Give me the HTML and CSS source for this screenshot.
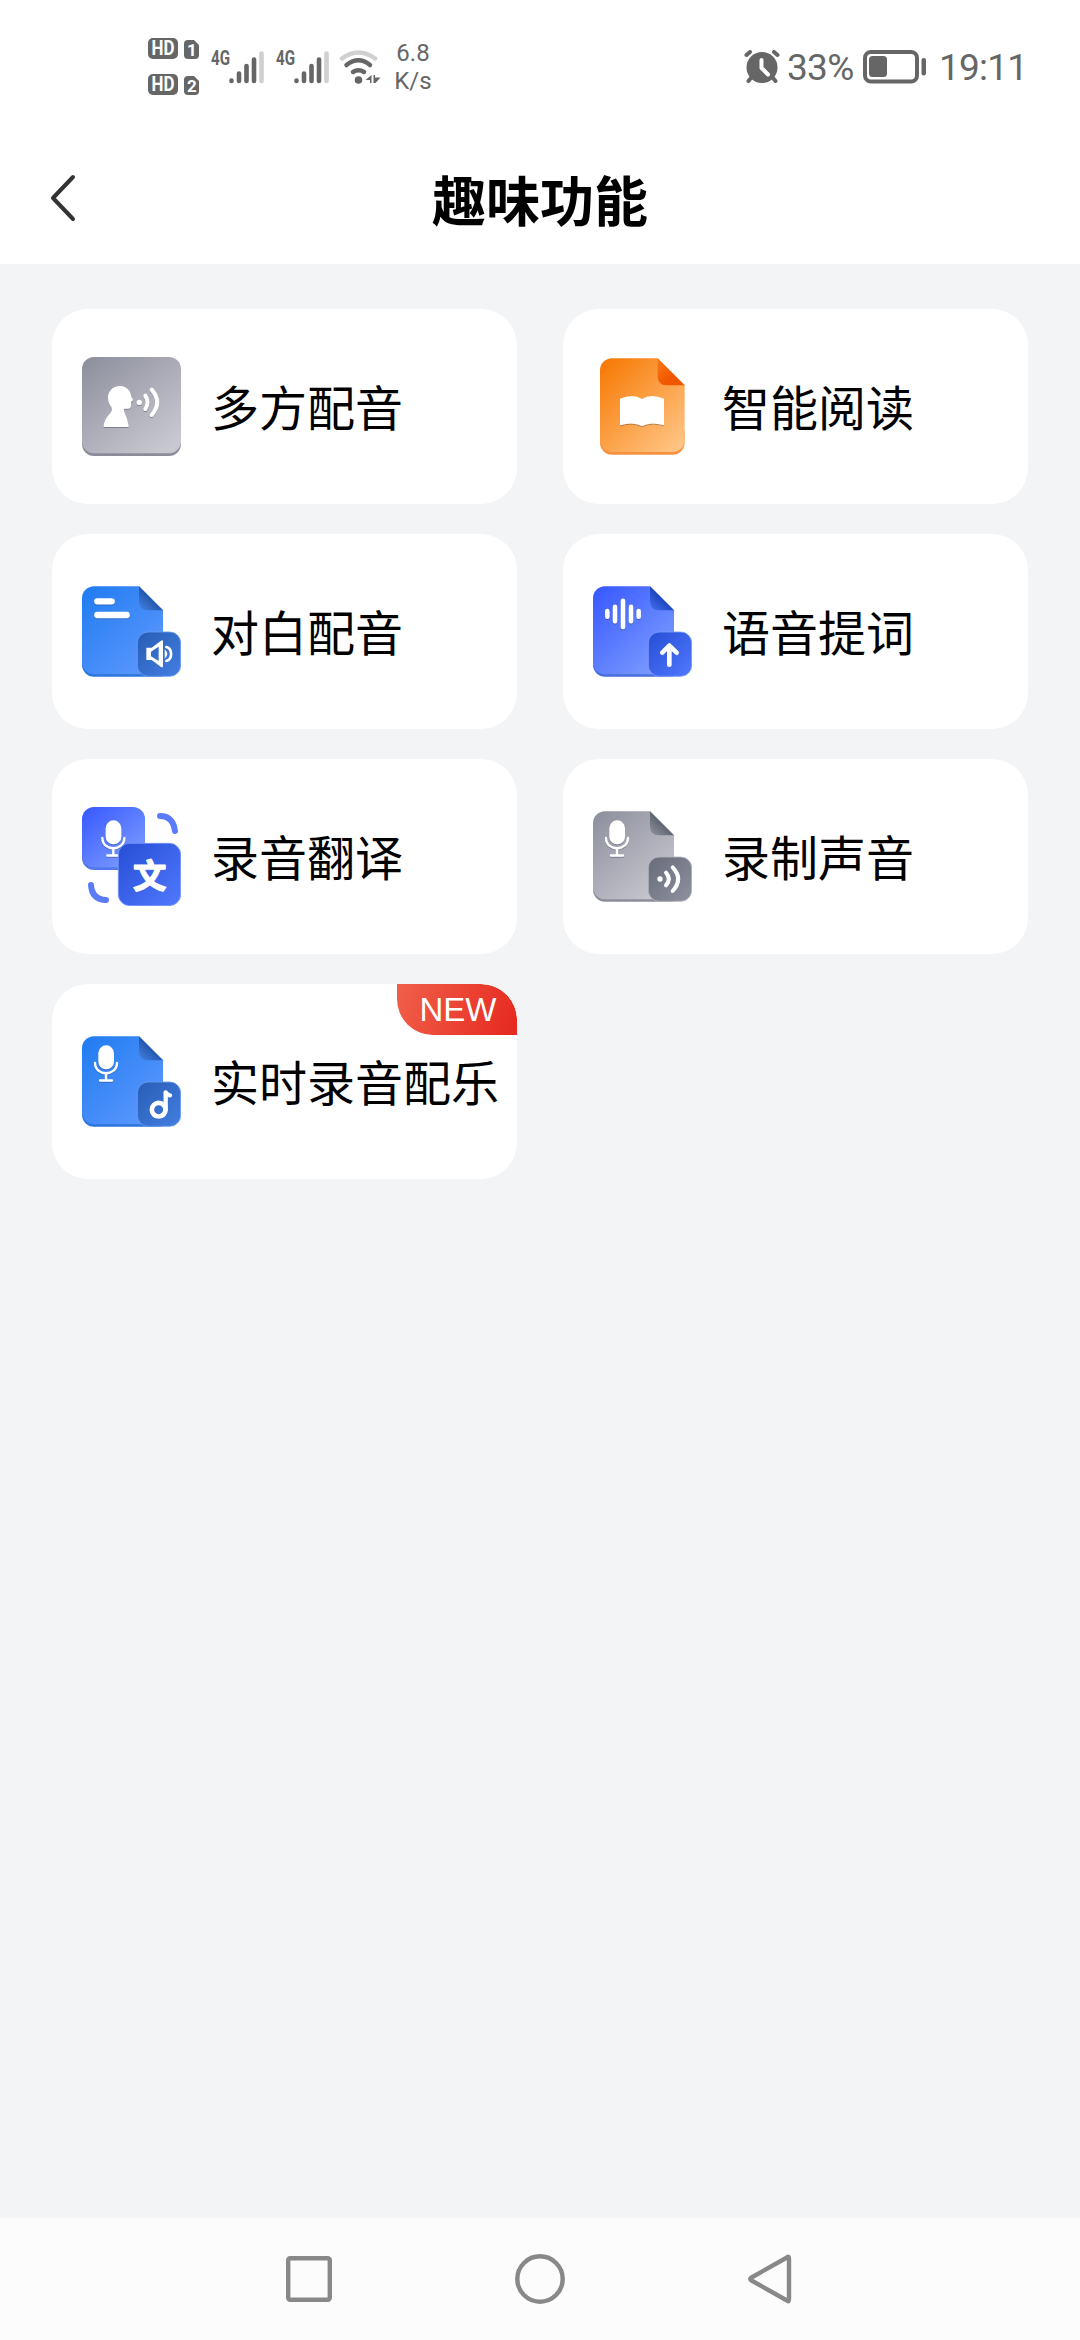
FILE: index.html
```html
<!DOCTYPE html>
<html lang="zh-CN">
<head>
<meta charset="utf-8">
<title>趣味功能</title>
<link rel="stylesheet" href="styles.css">
</head>
<body>
<svg class="defs" aria-hidden="true">
  <defs>
    <linearGradient id="grey" x1="0" y1="0" x2=".8" y2="1"><stop offset="0" stop-color="#8c8e9c"/><stop offset="1" stop-color="#c8c8d0"/></linearGradient>
    <linearGradient id="grey-dark" x1="0" y1="0" x2="1" y2="1"><stop offset="0" stop-color="#686b7a"/><stop offset="1" stop-color="#8f91a0"/></linearGradient>
    <linearGradient id="blue" x1="0" y1="0" x2=".9" y2="1"><stop offset="0" stop-color="#1f7cf0"/><stop offset="1" stop-color="#5f98ff"/></linearGradient>
    <linearGradient id="blue-dark" x1="0" y1="0" x2="1" y2="1"><stop offset="0" stop-color="#275db4"/><stop offset="1" stop-color="#437ee2"/></linearGradient>
    <linearGradient id="indigo" x1="0" y1="0" x2=".9" y2="1"><stop offset="0" stop-color="#3657ff"/><stop offset="1" stop-color="#80a0ff"/></linearGradient>
    <linearGradient id="indigo-dark" x1="0" y1="0" x2="1" y2="1"><stop offset="0" stop-color="#264ed4"/><stop offset="1" stop-color="#5079ff"/></linearGradient>
    <linearGradient id="orange" x1="0" y1="0" x2=".9" y2="1"><stop offset="0" stop-color="#f77700"/><stop offset="1" stop-color="#ffc585"/></linearGradient>
    <linearGradient id="orange-fold" x1="0" y1="0" x2="1" y2="1"><stop offset="0" stop-color="#fa7a17"/><stop offset=".6" stop-color="#f15600"/></linearGradient>
    <linearGradient id="fold-blue" gradientUnits="userSpaceOnUse" x1="208" y1="48" x2="182" y2="76"><stop offset="0" stop-color="#2456ac"/><stop offset="1" stop-color="#3b78d8"/></linearGradient>
    <linearGradient id="fold-indigo" gradientUnits="userSpaceOnUse" x1="208" y1="48" x2="182" y2="76"><stop offset="0" stop-color="#1d45bd"/><stop offset="1" stop-color="#3b66e4"/></linearGradient>
    <linearGradient id="fold-grey" gradientUnits="userSpaceOnUse" x1="208" y1="48" x2="182" y2="76"><stop offset="0" stop-color="#5f6270"/><stop offset="1" stop-color="#858794"/></linearGradient>
    <filter id="drop" x="-20%" y="-20%" width="140%" height="150%"><feDropShadow dx="0" dy="3" stdDeviation="1.5" flood-color="#224" flood-opacity=".35"/></filter>
    <path id="sheet" d="M36 13H171L243 85V277H36A36 36 0 0 1 0 241V49A36 36 0 0 1 36 13Z"/>
    <path id="sheet-base" d="M0 230V248A36 36 0 0 0 36 284H240V230Z"/>
    <path id="fold" d="M171 13L243 85H199Q171 85 171 57Z"/>
    <rect id="corner" x="166" y="150" width="130" height="133" rx="33"/>
    <g id="mic">
      <rect x="49" y="40" width="47" height="72" rx="23.5" fill="#fff"/>
      <path d="M39 93C40 134 104 134 105 93M72 124V145M54 145.500H90" fill="none" stroke="#fff" stroke-width="7" stroke-linecap="round"/>
    </g>
    <g id="bars">
      <text class="net" x="0" y="15" textLength="19" lengthAdjust="spacingAndGlyphs">4G</text>
      <path d="M20.500 30.500V31M28 23.500V31M35.500 16V31M43 9.500V31" stroke="#666" stroke-width="4.600" stroke-linecap="round"/>
      <path d="M50.500 3.500V31" stroke="#d0d0d0" stroke-width="4.600" stroke-linecap="round"/>
    </g>
  </defs>
</svg>

<header class="status">
  <div class="status-left">
    <svg class="sims" viewBox="0 0 52 60">
      <g fill="#666">
        <rect y="1" width="30" height="21" rx="5"/><path d="M40 3H46L51 8V18Q51 22 47 22H40Q36 22 36 18V7Q36 3 40 3Z"/>
        <rect y="37" width="30" height="21" rx="5"/><path d="M40 39H46L51 44V54Q51 58 47 58H40Q36 58 36 54V43Q36 39 40 39Z"/>
      </g>
      <g class="sim-text">
        <text x="3.500" y="18" textLength="23" lengthAdjust="spacingAndGlyphs">HD</text><text class="num" x="39" y="18.500">1</text>
        <text x="3.500" y="54" textLength="23" lengthAdjust="spacingAndGlyphs">HD</text><text class="num" x="39" y="54.500">2</text>
      </g>
    </svg>
    <svg class="signal" viewBox="0 0 55 34"><use href="#bars"/></svg>
    <svg class="signal" viewBox="0 0 55 34"><use href="#bars"/></svg>
    <svg class="wifi" viewBox="0 0 44 34" fill="none" stroke-linecap="round">
      <path d="M3 8.500Q19.500-3.500 36 8.500" stroke="#d0d0d0" stroke-width="4.500"/>
      <path d="M7.500 15Q19.500 5.500 31 15M14 22Q19.500 18.500 25 22" stroke="#666" stroke-width="4.500"/>
      <circle cx="19.500" cy="30" r="3.800" fill="#666"/>
      <path d="M32.500 25V33H31V30H26.500ZM34.500 33V25H36V27.500H41.500L36.500 33Z" fill="#666"/>
    </svg>
    <div class="rate"><span>6.8</span><span>K/s</span></div>
  </div>
  <div class="status-right">
    <svg class="alarm" viewBox="0 0 36 34">
      <circle cx="18" cy="17.500" r="15.500" fill="#666"/>
      <path d="M2.500 5L6 2M33.500 5L30 2M7 28L4.500 31M29 28L31.500 31" stroke="#666" stroke-width="4" stroke-linecap="round"/>
      <path d="M17.500 10V18L24 24.500" fill="none" stroke="#fff" stroke-width="4" stroke-linecap="round" stroke-linejoin="round"/>
    </svg>
    <span class="percent">33%</span>
    <svg class="battery" viewBox="0 0 64 34">
      <rect x="2" y="2" width="52" height="29.500" rx="6" fill="none" stroke="#666" stroke-width="4"/>
      <rect x="6" y="6" width="18" height="21" rx="3.500" fill="#666"/>
      <rect x="58.500" y="8" width="4.500" height="17.500" rx="2.200" fill="#666"/>
    </svg>
    <span class="clock">19:11</span>
  </div>
</header>

<div class="titlebar">
  <svg class="back" viewBox="0 0 28 50"><path d="M24 4L4 25L24 46" fill="none" stroke="#333" stroke-width="4" stroke-linecap="round" stroke-linejoin="round"/></svg>
  <h1>趣味功能</h1>
</div>

<main class="grid">
  <section class="card">
    <svg class="icon" viewBox="0 0 297 297">
      <rect y="8" width="297" height="289" rx="36" fill="#8b8c99"/>
      <rect width="297" height="289" rx="36" fill="url(#grey)"/>
      <g filter="url(#drop)">
        <path d="M114 87C92 87 78 103 78 122C78 138 86 145 89 152C92 160 88 164 82 172C72 184 66 193 65 210H140C138 188 131 176 126 163V155H137Q146 155 147 146V134L154 129L148 120C146 99 132 87 114 87Z" fill="#fff"/>
        <circle cx="172" cy="136" r="8" fill="#fff"/>
        <path d="M190 116Q203 136 190 156M209 98Q242 136 209 174" fill="none" stroke="#fff" stroke-width="12" stroke-linecap="round"/>
      </g>
    </svg>
    <span class="label">多方配音</span>
  </section>

  <section class="card">
    <svg class="icon" viewBox="0 0 297 297">
      <path d="M21 220V257A36 36 0 0 0 57 293H239A36 36 0 0 0 275 257V220Z" fill="#f69140"/>
      <path d="M57 4H194L275 85V249A36 36 0 0 1 239 285H57A36 36 0 0 1 21 249V40A36 36 0 0 1 57 4Z" fill="url(#orange)"/>
      <path d="M194 4L275 85H222Q194 85 194 57Z" fill="url(#orange-fold)"/>
      <path d="M81 125Q120 108 147 126Q174 108 213 125V205Q174 193 147 207Q120 193 81 205Z" fill="#fff" filter="url(#drop)"/>
    </svg>
    <span class="label">智能阅读</span>
  </section>

  <section class="card">
    <svg class="icon" viewBox="0 0 297 297">
      <use href="#sheet-base" fill="#2b76dc"/><use href="#sheet" fill="url(#blue)"/><use href="#fold" fill="url(#fold-blue)"/>
      <path d="M46 58H89M46 99H134" stroke="#224" stroke-opacity=".25" stroke-width="19" stroke-linecap="round" transform="translate(0 3)"/>
      <path d="M46 58H89M46 99H134" stroke="#fff" stroke-width="19" stroke-linecap="round"/>
      <use href="#corner" fill="url(#blue-dark)" stroke="#6a9cf2" stroke-width="2.500"/>
      <path fill-rule="evenodd" d="M193 197H209L237 176Q243 173 243 179V252Q243 259 237 255L209 234H193ZM207 209V223L230 237V194Z" fill="#fff"/>
      <path d="M248 202Q264 216 248 230Z" fill="#fff"/>
      <path d="M253 195C272 200 272 232 253 237" fill="none" stroke="#fff" stroke-width="8" stroke-linecap="round"/>
    </svg>
    <span class="label">对白配音</span>
  </section>

  <section class="card">
    <svg class="icon" viewBox="0 0 297 297">
      <use href="#sheet-base" fill="#466edf"/><use href="#sheet" fill="url(#indigo)"/><use href="#fold" fill="url(#fold-indigo)"/>
      <path d="M43 87V104M66 74V118M90 56V135M114 74V118M137 87V104" stroke="#fff" stroke-width="13.500" stroke-linecap="round" filter="url(#drop)"/>
      <use href="#corner" fill="url(#indigo-dark)" stroke="#7c9bfa" stroke-width="2.500"/>
      <path d="M229 248V191M208 212L229 191L251 212" fill="none" stroke="#fff" stroke-width="14" stroke-linecap="round" stroke-linejoin="round"/>
    </svg>
    <span class="label">语音提词</span>
  </section>

  <section class="card">
    <svg class="icon" viewBox="0 0 297 297">
      <rect y="9" width="189" height="180" rx="36" fill="#5278ec"/>
      <rect width="189" height="181" rx="36" fill="url(#indigo)"/>
      <use href="#mic" x="22" filter="url(#drop)"/>
      <rect x="109" y="109" width="187" height="187" rx="34" fill="url(#indigo-dark)" stroke="#7594fa" stroke-width="2.500"/>
      <text class="wen" x="153" y="242">文</text>
      <path d="M234 27Q273 27 279 72M27 234Q30 278 72 279" fill="none" stroke="#5b7cf8" stroke-width="18" stroke-linecap="round"/>
    </svg>
    <span class="label">录音翻译</span>
  </section>

  <section class="card">
    <svg class="icon" viewBox="0 0 297 297">
      <use href="#sheet-base" fill="#8b8d9a"/><use href="#sheet" fill="url(#grey)"/><use href="#fold" fill="url(#fold-grey)"/>
      <use href="#mic" filter="url(#drop)"/>
      <use href="#corner" fill="url(#grey-dark)" stroke="#b3b4bd" stroke-width="2.500"/>
      <circle cx="201" cy="216" r="8" fill="#fff"/>
      <path d="M219 197Q236 216 219 235M239 181Q272 216 239 252" fill="none" stroke="#fff" stroke-width="12" stroke-linecap="round"/>
    </svg>
    <span class="label">录制声音</span>
  </section>

  <section class="card">
    <svg class="icon" viewBox="0 0 297 297">
      <use href="#sheet-base" fill="#2b76dc"/><use href="#sheet" fill="url(#blue)"/><use href="#fold" fill="url(#fold-blue)"/>
      <use href="#mic" filter="url(#drop)"/>
      <use href="#corner" fill="url(#blue-dark)" stroke="#6a9cf2" stroke-width="2.500"/>
      <circle cx="230" cy="233" r="20.500" fill="none" stroke="#fff" stroke-width="14"/>
      <path d="M251 233V181Q255 189 264 190" fill="none" stroke="#fff" stroke-width="13" stroke-linecap="round" stroke-linejoin="round"/>
    </svg>
    <span class="label">实时录音配乐</span>
    <span class="tag">NEW</span>
  </section>
</main>

<nav class="navbar">
  <svg viewBox="0 0 52 52"><rect x="5.200" y="5.200" width="41.600" height="41.600" rx="2"/></svg>
  <svg viewBox="0 0 52 52"><circle cx="26" cy="26" r="22.700"/></svg>
  <svg viewBox="0 0 52 52"><path d="M42 4.500Q44 2.500 44 6V46Q44 49.500 42 47.500L6.500 27.500Q4 26 6.500 24.500Z"/></svg>
</nav>
</body>
</html>
```

FILE: styles.css
```css
* { box-sizing: border-box; }

body {
  margin: 0;
  width: 1080px;
  height: 2340px;
  display: flex;
  flex-direction: column;
  background: #f3f4f6;
  font-family: "Noto Sans CJK SC", sans-serif;
  color: #000;
  overflow: hidden;
}

svg { display: block; flex: none; }
.defs { position: absolute; width: 0; height: 0; }

.status {
  height: 132px;
  padding: 2px 51px 0 148px;
  display: flex;
  justify-content: space-between;
  align-items: center;
  background: #fff;
  color: #666;
  font-family: Roboto, sans-serif;
}

.status-left, .status-right { display: flex; align-items: center; }
.sims { width: 52px; height: 60px; margin-right: 11px; }
.sim-text, .net { font-family: Roboto, sans-serif; font-weight: 700; }
.sim-text { font-size: 20px; fill: #fff; }
.sim-text .num { font-size: 17px; }
.net { font-size: 20px; fill: #666; }
.signal { width: 55px; height: 34px; margin-right: 10px; }
.wifi { width: 44px; height: 34px; margin: 0 9px 0 -2px; }
.rate {
  width: 42px;
  display: flex;
  flex-direction: column;
  align-items: center;
  font-size: 24px;
  line-height: 28px;
}
.alarm { width: 36px; height: 34px; margin-right: 7px; }
.percent { width: 70px; font-size: 37px; letter-spacing: -.7px; }
.battery { width: 64px; height: 34px; margin: 0 12px 0 6px; }
.clock { width: 90px; font-size: 37px; letter-spacing: -.8px; }

.titlebar {
  height: 132px;
  padding: 0 49px;
  display: grid;
  grid-template-columns: 28px 1fr 28px;
  align-items: center;
  background: #fff;
}
.titlebar h1 {
  margin: 2px 0 0;
  text-align: center;
  font-size: 54px;
  line-height: 80px;
  font-weight: 700;
}
.back { width: 28px; height: 50px; }

.grid {
  flex: 1;
  padding: 45px 52px;
  display: grid;
  grid-template-columns: 465px 465px;
  grid-auto-rows: 195px;
  align-content: start;
  gap: 30px 46px;
}

.card {
  position: relative;
  padding-left: 30px;
  display: flex;
  align-items: center;
  gap: 30px;
  background: #fff;
  border-radius: 36px;
  overflow: hidden;
}
.icon { width: 99px; height: 99px; }
.label {
  padding-bottom: 3px;
  font-size: 48px;
  line-height: 70px;
  white-space: nowrap;
}
.wen {
  font-family: "Noto Sans CJK SC", sans-serif;
  font-size: 100px;
  font-weight: 700;
  fill: #fff;
  stroke: #fff;
  stroke-width: 4px;
  stroke-linejoin: round;
}

.tag {
  position: absolute;
  top: 0;
  right: 0;
  width: 120px;
  height: 51px;
  border-radius: 0 36px 0 36px;
  background: linear-gradient(110deg, #f0604a, #e6281f);
  color: #fff;
  font: 33px/52px "Liberation Sans", sans-serif;
  text-align: center;
  padding-left: 2px;
}

.navbar {
  height: 122px;
  padding: 0 283px;
  display: flex;
  justify-content: space-between;
  align-items: center;
  background: #fcfcfc;
}
.navbar svg {
  width: 52px;
  height: 52px;
  fill: none;
  stroke: #888;
  stroke-width: 4.400px;
  stroke-linejoin: round;
}
```
